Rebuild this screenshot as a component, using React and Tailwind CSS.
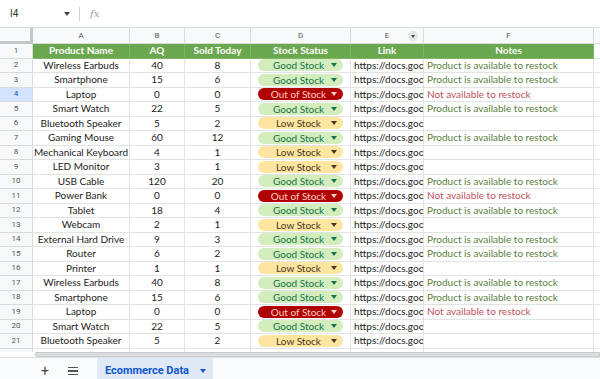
import React from "react";

const G = "Product is available to restock";
const N = "Not available to restock";
const rows = [
  ["Wireless Earbuds", 40, 8, "good", G],
  ["Smartphone", 15, 6, "good", G],
  ["Laptop", 0, 0, "out", N],
  ["Smart Watch", 22, 5, "good", G],
  ["Bluetooth Speaker", 5, 2, "low", ""],
  ["Gaming Mouse", 60, 12, "good", G],
  ["Mechanical Keyboard", 4, 1, "low", ""],
  ["LED Monitor", 3, 1, "low", ""],
  ["USB Cable", 120, 20, "good", G],
  ["Power Bank", 0, 0, "out", N],
  ["Tablet", 18, 4, "good", G],
  ["Webcam", 2, 1, "low", ""],
  ["External Hard Drive", 9, 3, "good", G],
  ["Router", 6, 2, "good", G],
  ["Printer", 1, 1, "low", ""],
  ["Wireless Earbuds", 40, 8, "good", G],
  ["Smartphone", 15, 6, "good", G],
  ["Laptop", 0, 0, "out", N],
  ["Smart Watch", 22, 5, "good", ""],
  ["Bluetooth Speaker", 5, 2, "low", ""],
];

const chipStyles = {
  good: { label: "Good Stock", cls: "bg-[#d4edbc] text-[#11734b]", arrow: "border-t-[#11734b]" },
  low: { label: "Low Stock", cls: "bg-[#ffe5a0] text-[#473821]", arrow: "border-t-[#473821]" },
  out: { label: "Out of Stock", cls: "bg-[#b10202] text-[#ffcfc9]", arrow: "border-t-[#ffcfc9]" },
};

const cols = "grid grid-cols-[33px_97px_55px_66px_100px_73px_170px_6px]";
const cell = "border-r border-b border-[#e2e3e3] flex items-center overflow-hidden whitespace-nowrap";

function Chip({ kind }) {
  const c = chipStyles[kind];
  return (
    <div className={`mx-[7px] w-full h-[12px] rounded-full flex items-center ${c.cls}`}>
      <span className="flex-1 text-center pl-[8px] leading-none">{c.label}</span>
      <span className={`w-0 h-0 border-l-[3.5px] border-r-[3.5px] border-t-[4px] border-l-transparent border-r-transparent mr-[6px] ${c.arrow}`}></span>
    </div>
  );
}

export default function App() {
  return (
    <div className="w-[600px] h-[379px] overflow-hidden bg-white flex flex-col font-['Lato','Liberation_Sans',sans-serif] text-[10px] text-[#222]">
      {/* formula bar */}
      <div className="h-[28px] shrink-0 flex items-center border-b border-[#d9dbdd] font-['Roboto',sans-serif]">
        <span className="ml-[10px] w-[50px] text-[10px] text-[#333]">I4</span>
        <span className="ml-[4px] w-0 h-0 border-l-[3px] border-r-[3px] border-t-[4px] border-l-transparent border-r-transparent border-t-[#444]"></span>
        <span className="ml-[9px] w-px h-[14px] bg-[#d0d3d6]"></span>
        <span className="ml-[10px] text-[10px] italic text-[#9aa0a6] font-['DejaVu_Serif',serif]">fx</span>
      </div>
      {/* column headers */}
      <div className={`${cols} h-[16px] shrink-0 bg-[#f8f9fa] font-['Roboto',sans-serif] text-[8px] text-[#555]`}>
        <div className="border-r-[3px] border-b-[3px] border-[#c4c7c5] bg-[#f8f9fa]"></div>
        {["A", "B", "C", "D"].map((l) => (
          <div key={l} className="border-r border-b border-[#d9dbdd] flex items-center justify-center">{l}</div>
        ))}
        <div className="border-r border-b border-[#d9dbdd] flex items-center justify-center relative">
          E
          <span className="absolute right-[5px] top-[3px] w-[10px] h-[10px] rounded-full bg-[#e3e5e8] flex items-center justify-center">
            <span className="w-0 h-0 border-l-[2.5px] border-r-[2.5px] border-t-[3px] border-l-transparent border-r-transparent border-t-[#444]"></span>
          </span>
        </div>
        <div className="border-r border-b border-[#d9dbdd] flex items-center justify-center">F</div>
        <div className="border-b border-[#d9dbdd]"></div>
      </div>
      {/* header row 1 */}
      <div className={`${cols} h-[14.5px] shrink-0`}>
        <div className="border-r border-b border-[#d9dbdd] bg-[#f8f9fa] flex items-center justify-center font-['Roboto',sans-serif] text-[8px] text-[#555]">1</div>
        {["Product Name", "AQ", "Sold Today", "Stock Status", "Link", "Notes"].map((h) => (
          <div key={h} className="border-r border-b border-[#7fb566] bg-[#6aa84f] text-white font-bold flex items-center justify-center whitespace-nowrap overflow-hidden">{h}</div>
        ))}
        <div className="border-b border-[#e2e3e3]"></div>
      </div>
      {rows.map((r, i) => {
        const n = i + 2;
        const sel = n === 4;
        return (
          <div key={i} className={`${cols} h-[14.5px] shrink-0`}>
            <div className={`border-r border-b border-[#d9dbdd] flex items-center justify-center font-['Roboto',sans-serif] text-[8px] ${sel ? "bg-[#d3e3fd] text-[#0b57d0]" : "bg-[#f8f9fa] text-[#555]"}`}>{n}</div>
            <div className={`${cell} justify-center`}>{r[0]}</div>
            <div className={`${cell} justify-center`}>{r[1]}</div>
            <div className={`${cell} justify-center`}>{r[2]}</div>
            <div className={`${cell}`}><Chip kind={r[3]} /></div>
            <div className={`${cell} pl-[3px]`}>https://docs.goo</div>
            <div className={`${cell} pl-[3px] ${r[3] === "out" ? "text-[#c0515c]" : "text-[#5a8040]"}`}>{r[4]}</div>
            <div className="border-b border-[#e2e3e3]"></div>
          </div>
        );
      })}
      {/* partial row */}
      <div className={`${cols} h-[3.5px] shrink-0`}>
        <div className="border-r border-[#d9dbdd] bg-[#f8f9fa]"></div>
        <div className="border-r border-[#e2e3e3]"></div>
        <div className="border-r border-[#e2e3e3]"></div>
        <div className="border-r border-[#e2e3e3]"></div>
        <div className="border-r border-[#e2e3e3]"></div>
        <div className="border-r border-[#e2e3e3]"></div>
        <div className="border-r border-[#e2e3e3]"></div>
        <div></div>
      </div>
      {/* scrollbar */}
      <div className="h-[6px] shrink-0 flex bg-[#f1f3f4] border-b border-[#e0e2e4]">
        <div className="w-[35px] bg-white"></div>
        <div className="flex-1 bg-[#dadce0] rounded-l-[2px] border border-[#c8cacd]"></div>
      </div>
      {/* tab bar */}
      <div className="flex-1 flex items-stretch bg-[#f9fbfd] font-['Roboto',sans-serif]">
        <span className="ml-[39px] w-[12px] flex items-center justify-center text-[14px] leading-none text-[#444] pt-[4px]">+</span>
        <span className="ml-[16px] w-[12px] flex items-center justify-center pt-[4px]">
          <span className="flex flex-col gap-[2px]">
            <span className="w-[10px] h-[1.5px] bg-[#555]"></span>
            <span className="w-[10px] h-[1.5px] bg-[#555]"></span>
            <span className="w-[10px] h-[1.5px] bg-[#555]"></span>
          </span>
        </span>
        <div className="ml-[18px] w-[116px] bg-[#e1e9f7] flex items-center pt-[5px] pl-[8px]">
          <span className="text-[11px] font-bold text-[#0b57d0]">Ecommerce Data</span>
          <span className="ml-[11px] w-0 h-0 border-l-[3px] border-r-[3px] border-t-[4px] border-l-transparent border-r-transparent border-t-[#0b57d0]"></span>
        </div>
      </div>
    </div>
  );
}
